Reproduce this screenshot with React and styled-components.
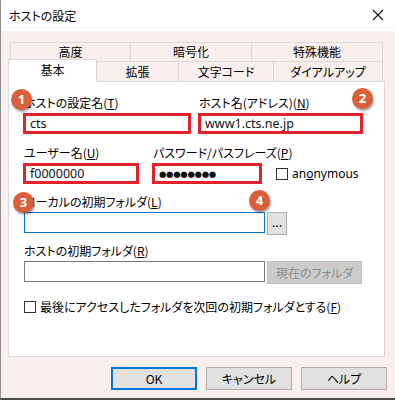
import React from 'react';
import styled, { createGlobalStyle } from 'styled-components';

const GlobalStyle = createGlobalStyle`
  html, body {
    margin: 0;
    padding: 0;
    background: #3a3a3a;
  }
  body {
    font-family: "Noto Sans CJK JP", "Noto Sans", sans-serif;
    font-size: 12px;
    font-feature-settings: "palt";
    color: #000;
  }
  * {
    box-sizing: border-box;
  }
`;

const topTabs = [
  { label: '高度', w: 121 },
  { label: '暗号化', w: 122 },
  { label: '特殊機能', w: 132 },
];

const bottomTabs = [
  { label: '基本', w: 89, selected: true },
  { label: '拡張', w: 83 },
  { label: '文字コード', w: 96 },
  { label: 'ダイアルアップ', w: 110 },
];

function App() {
  return (
    <>
      <GlobalStyle />
      <Window>
        <TitleBar>
          <span>ホストの設定</span>
          <CloseIcon width="12" height="12" viewBox="0 0 12 12">
            <path d="M1 1 L11 11 M11 1 L1 11" stroke="#111" strokeWidth="1.1" fill="none" />
          </CloseIcon>
        </TitleBar>

        <Content>
          <TabRow $top>
            {topTabs.map((t) => (
              <Tab key={t.label} $w={t.w}>{t.label}</Tab>
            ))}
          </TabRow>
          <TabRow>
            {bottomTabs.map((t) => (
              <Tab key={t.label} $w={t.w} $selected={t.selected}>{t.label}</Tab>
            ))}
          </TabRow>

          <Panel>
            <Row>
              <Field $w={168}>
                <Label>ホストの設定名(<u>T</u>)</Label>
                <MarkedInput>cts</MarkedInput>
              </Field>
              <Field $w={165} $ml={7}>
                <Label>ホスト名(アドレス)(<u>N</u>)</Label>
                <MarkedInput>www1.cts.ne.jp</MarkedInput>
              </Field>
            </Row>

            <Row $mt={11}>
              <Field $w={116}>
                <Label>ユーザー名(<u>U</u>)</Label>
                <MarkedInput>f0000000</MarkedInput>
              </Field>
              <Field $w={110} $ml={13}>
                <Label>パスワード/パスフレーズ(<u>P</u>)</Label>
                <MarkedInput>
                  <Dots>●●●●●●●●</Dots>
                </MarkedInput>
              </Field>
              <CheckLine $inline>
                <CheckBox />
                <LatinText>an<u>o</u>nymous</LatinText>
              </CheckLine>
            </Row>

            <Group $mt={10}>
              <Label>ローカルの初期フォルダ(<u>L</u>)</Label>
              <ControlRow>
                <TextBox $focused />
                <SmallButton>...</SmallButton>
              </ControlRow>
            </Group>

            <Group $mt={8}>
              <Label>ホストの初期フォルダ(<u>R</u>)</Label>
              <ControlRow>
                <TextBox />
                <SmallButton $disabled $w={95}>現在のフォルダ</SmallButton>
              </ControlRow>
            </Group>

            <CheckLine $mt={15}>
              <CheckBox />
              <span>最後にアクセスしたフォルダを次回の初期フォルダとする(<u>F</u>)</span>
            </CheckLine>

            <Badge $x={2} $y={7}>1</Badge>
            <Badge $x={343} $y={6}>2</Badge>
            <Badge $x={4} $y={110}>3</Badge>
            <Badge $x={240} $y={108}>4</Badge>
          </Panel>

          <Footer>
            <DialogButton $default>OK</DialogButton>
            <DialogButton>キャンセル</DialogButton>
            <DialogButton>ヘルプ</DialogButton>
          </Footer>
        </Content>
      </Window>
    </>
  );
}

const Window = styled.div`
  width: 395px;
  height: 400px;
  background: #f9efec;
  border-left: 1px solid #8c8c8c;
  border-bottom: 2px solid #4a4a4a;
  display: flex;
  flex-direction: column;
`;

const TitleBar = styled.div`
  height: 31px;
  background: #fff;
  display: flex;
  align-items: center;
  justify-content: space-between;
  padding: 0 11px 1px 8px;
  font-size: 12px;
`;

const CloseIcon = styled.svg`
  display: block;
`;

const Content = styled.div`
  padding: 11px 8px 0 7px;
  display: flex;
  flex-direction: column;
`;

const TabRow = styled.div`
  display: flex;
  align-items: flex-start;
  margin-left: ${(p) => (p.$top ? '2px' : '0')};
  height: ${(p) => (p.$top ? '19px' : '20px')};
`;

const Tab = styled.div`
  width: ${(p) => p.$w}px;
  height: ${(p) => (p.$selected ? '23px' : '100%')};
  margin-left: -1px;
  &:first-child {
    margin-left: 0;
  }
  margin-top: ${(p) => (p.$selected ? '-2px' : '0')};
  border: 1px solid #d9d9d9;
  border-bottom: none;
  background: ${(p) => (p.$selected ? '#fff' : '#f9efec')};
  position: relative;
  z-index: ${(p) => (p.$selected ? 2 : 0)};
  display: flex;
  align-items: center;
  justify-content: center;
  font-size: 12px;
  line-height: 16px;
  padding-bottom: ${(p) => (p.$selected ? '3px' : '0')};
`;

const Panel = styled.div`
  position: relative;
  width: 377px;
  height: 276px;
  background: #fff;
  border: 1px solid #d9d9d9;
  padding: 13px 0 0 14px;
`;

const Row = styled.div`
  display: flex;
  align-items: flex-end;
  margin-top: ${(p) => p.$mt || 0}px;
`;

const Field = styled.div`
  display: flex;
  flex-direction: column;
  width: ${(p) => p.$w}px;
  margin-left: ${(p) => p.$ml || 0}px;
`;

const Group = styled.div`
  display: flex;
  flex-direction: column;
  margin-top: ${(p) => p.$mt || 0}px;
`;

const Label = styled.div`
  height: 16px;
  line-height: 16px;
  margin-bottom: 2px;
  padding-left: 1px;
  white-space: nowrap;
`;

const MarkedInput = styled.div`
  height: 21px;
  border: 3px solid #e4222b;
  background: #fff;
  padding-left: 4px;
  font-family: "Noto Sans", "Noto Sans CJK JP", sans-serif;
  font-size: 12.5px;
  line-height: 14px;
  color: #111;
  display: flex;
  align-items: center;
`;

const Dots = styled.span`
  font-size: 8.5px;
  letter-spacing: -0.3px;
  font-family: "DejaVu Sans", sans-serif;
`;

const LatinText = styled.span`
  font-family: "Noto Sans", sans-serif;
  font-size: 12px;
`;

const CheckLine = styled.div`
  display: flex;
  align-items: center;
  gap: 4px;
  height: 16px;
  line-height: 16px;
  margin-top: ${(p) => p.$mt || 0}px;
  margin-left: ${(p) => (p.$inline ? '14px' : '1px')};
  margin-bottom: ${(p) => (p.$inline ? '2px' : '0')};
  white-space: nowrap;
`;

const CheckBox = styled.span`
  display: inline-block;
  width: 12px;
  height: 12px;
  border: 1px solid #333;
  background: #fff;
  flex-shrink: 0;
`;

const ControlRow = styled.div`
  display: flex;
  align-items: flex-start;
  gap: 2px;
  padding-left: 1px;
`;

const TextBox = styled.div`
  width: 241px;
  height: 21px;
  background: #fff;
  border: 1px solid ${(p) => (p.$focused ? '#0078d7' : '#7a7a7a')};
`;

const SmallButton = styled.div`
  width: ${(p) => p.$w || 20}px;
  height: 23px;
  background: ${(p) => (p.$disabled ? '#cccccc' : '#e1e1e1')};
  border: 1px solid ${(p) => (p.$disabled ? '#bfbfbf' : '#adadad')};
  color: ${(p) => (p.$disabled ? '#8d8d8d' : '#000')};
  display: flex;
  align-items: center;
  justify-content: center;
  font-size: 12px;
  line-height: 14px;
  padding-bottom: ${(p) => (p.$disabled ? '0' : '3px')};
`;

const Badge = styled.div`
  position: absolute;
  left: ${(p) => p.$x}px;
  top: ${(p) => p.$y}px;
  width: 21px;
  height: 21px;
  border-radius: 50%;
  background: #d9603b;
  color: #fff;
  font-family: "Noto Sans", sans-serif;
  font-weight: 700;
  font-size: 13px;
  line-height: 21px;
  text-align: center;
  box-shadow: 1px 2px 2px rgba(0, 0, 0, 0.35);
`;

const Footer = styled.div`
  display: flex;
  justify-content: flex-end;
  gap: 9px;
  margin-top: 10px;
`;

const DialogButton = styled.div`
  width: 86px;
  height: 23px;
  background: #e1e1e1;
  border: ${(p) => (p.$default ? '2px solid #0078d7' : '1px solid #adadad')};
  display: flex;
  align-items: center;
  justify-content: center;
  font-size: 12px;
  line-height: 14px;
`;

export default App;
